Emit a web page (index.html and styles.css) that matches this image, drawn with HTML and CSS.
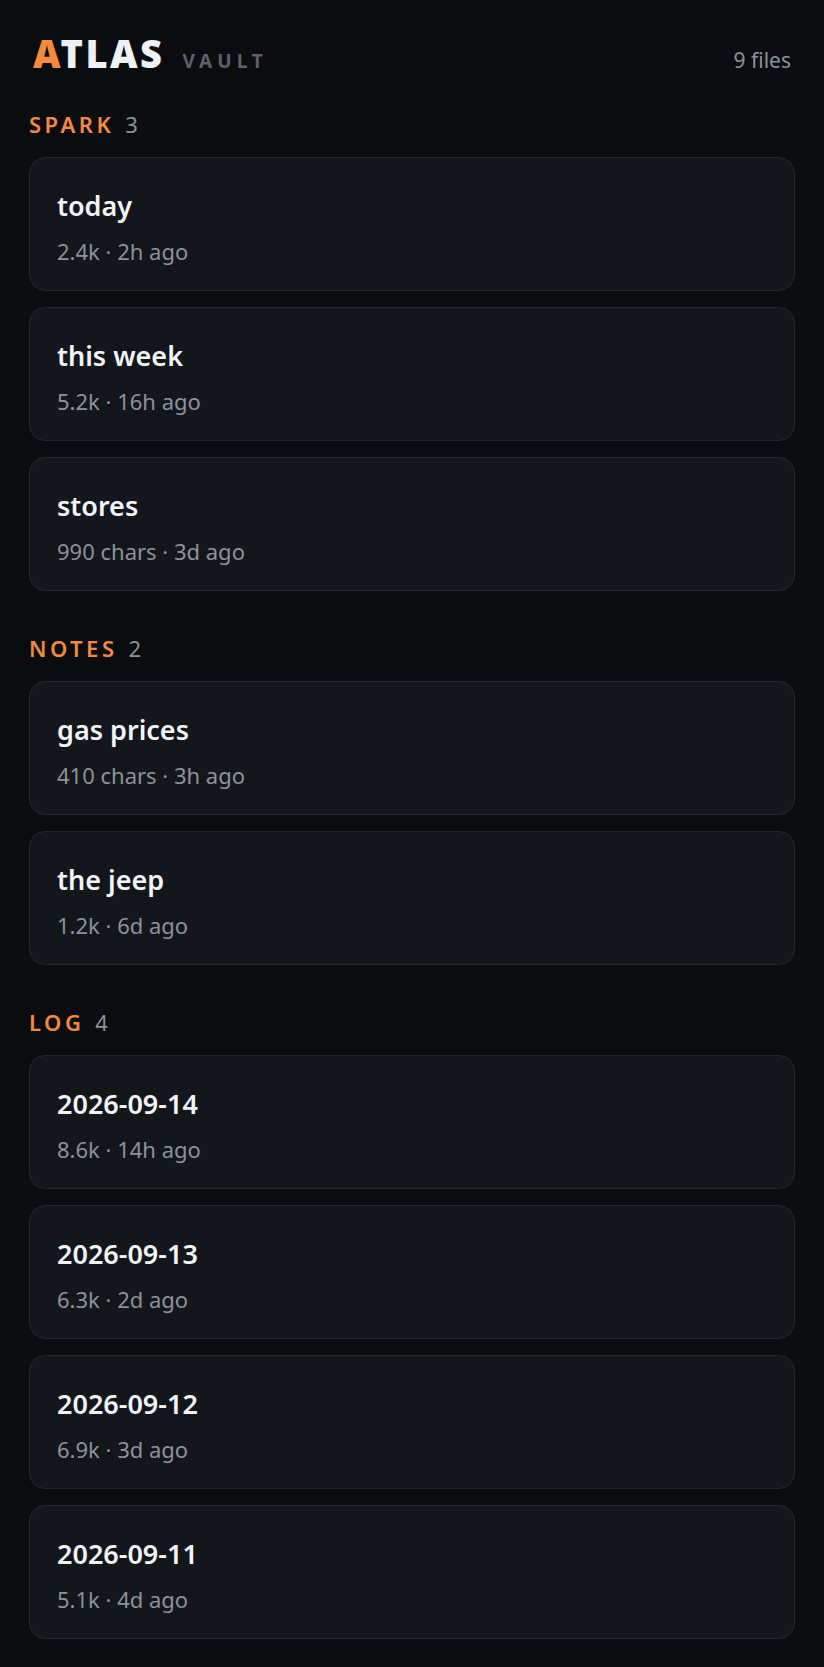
FILE: index.html
```html
<!DOCTYPE html>
<html lang="en">
<head>
<meta charset="utf-8">
<title>Atlas Vault</title>
<link rel="stylesheet" href="styles.css">
</head>
<body>
<div class="page">
  <header class="header">
    <div class="brand">
      <span class="logo"><span class="logo-a">A</span>TLAS</span>
      <span class="sub">VAULT</span>
    </div>
    <span class="files">9 files</span>
  </header>

  <section class="section">
    <h2 class="label"><span class="label-name">SPARK</span><span class="label-count">3</span></h2>
    <div class="list">
      <div class="card"><div class="title">today</div><div class="meta">2.4k · 2h ago</div></div>
      <div class="card"><div class="title">this week</div><div class="meta">5.2k · 16h ago</div></div>
      <div class="card"><div class="title">stores</div><div class="meta">990 chars · 3d ago</div></div>
    </div>
  </section>

  <section class="section">
    <h2 class="label"><span class="label-name">NOTES</span><span class="label-count">2</span></h2>
    <div class="list">
      <div class="card"><div class="title">gas prices</div><div class="meta">410 chars · 3h ago</div></div>
      <div class="card"><div class="title">the jeep</div><div class="meta">1.2k · 6d ago</div></div>
    </div>
  </section>

  <section class="section">
    <h2 class="label"><span class="label-name">LOG</span><span class="label-count">4</span></h2>
    <div class="list">
      <div class="card"><div class="title">2026-09-14</div><div class="meta">8.6k · 14h ago</div></div>
      <div class="card"><div class="title">2026-09-13</div><div class="meta">6.3k · 2d ago</div></div>
      <div class="card"><div class="title">2026-09-12</div><div class="meta">6.9k · 3d ago</div></div>
      <div class="card"><div class="title">2026-09-11</div><div class="meta">5.1k · 4d ago</div></div>
    </div>
  </section>
</div>
</body>
</html>
```

FILE: styles.css
```css
* { box-sizing: border-box; }
html, body {
  margin: 0;
  padding: 0;
  background: #0a0c10;
}
body {
  font-family: "Noto Sans", "Open Sans", sans-serif;
  color: #eef1f5;
}
.page {
  padding: 34px 29px 28px;
}
.header {
  display: flex;
  align-items: baseline;
  justify-content: space-between;
  padding: 0 4px;
}
.brand {
  display: flex;
  align-items: baseline;
  gap: 18px;
}
.logo {
  font-size: 38px;
  line-height: 38px;
  font-weight: 900;
  letter-spacing: 2.5px;
  color: #eef1f5;
}
.logo-a { color: #f58a3c; }
.sub {
  font-size: 19px;
  font-weight: 700;
  letter-spacing: 5px;
  color: #5c6169;
}
.files {
  font-size: 21px;
  color: #8b929b;
}
.section { margin-top: 42px; }
.section:first-of-type { margin-top: 35px; }
.label {
  margin: 0 0 18px;
  font-size: 22px;
  line-height: 30px;
  font-weight: 600;
  display: flex;
  align-items: baseline;
  gap: 11px;
}
.label-name {
  color: #f58a3c;
  letter-spacing: 3.5px;
}
.label-count {
  color: #8b929b;
  font-weight: 400;
}
.list {
  display: flex;
  flex-direction: column;
  gap: 16px;
}
.card {
  background: #13161b;
  border: 1px solid #23282f;
  border-radius: 16px;
  padding: 28px 27px 22px;
}
.title {
  font-size: 27px;
  line-height: 39px;
  font-weight: 600;
  color: #f2f4f7;
}
.meta {
  margin-top: 10px;
  font-size: 22px;
  line-height: 33px;
  color: #8b929b;
}
```
